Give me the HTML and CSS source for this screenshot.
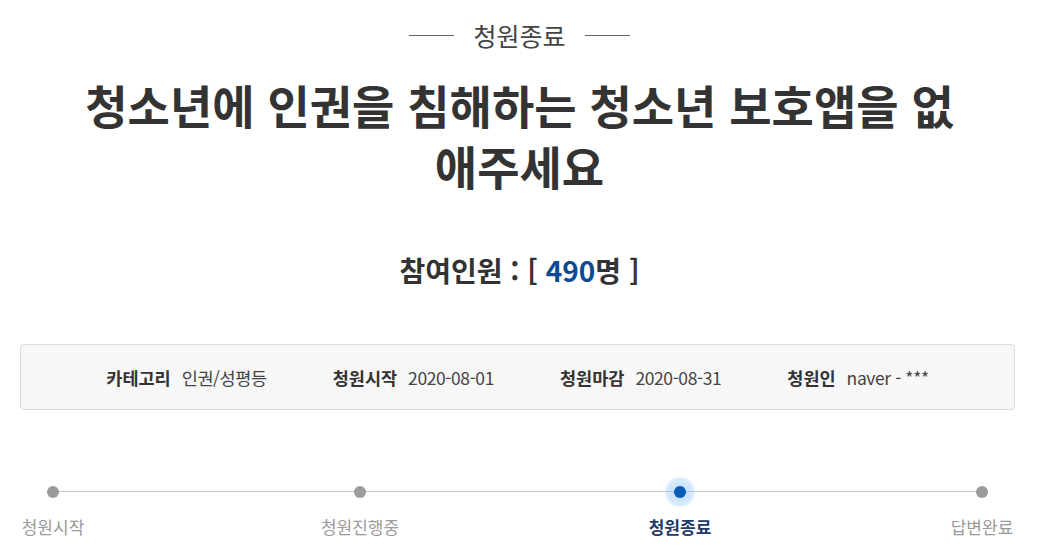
FILE: index.html
```html
<!DOCTYPE html>
<html lang="ko">
<head>
<meta charset="utf-8">
<title>청원종료</title>
<link rel="stylesheet" href="styles.css">
</head>
<body>
<div class="page">
  <div class="status">
    <span class="status-line"></span>
    <span class="status-text">청원종료</span>
    <span class="status-line"></span>
  </div>
  <h1 class="title">청소년에 인권을 침해하는 청소년 보호앱을 없<br>애주세요</h1>
  <p class="count">참여인원 : [ <span class="count-num">490</span>명 ]</p>
  <div class="info">
    <div class="info-item"><span class="info-label">카테고리</span><span class="info-value">인권/성평등</span></div>
    <div class="info-item"><span class="info-label">청원시작</span><span class="info-value">2020-08-01</span></div>
    <div class="info-item"><span class="info-label">청원마감</span><span class="info-value">2020-08-31</span></div>
    <div class="info-item"><span class="info-label">청원인</span><span class="info-value">naver - ***</span></div>
  </div>
  <div class="steps">
    <div class="step step-1"><span class="dot"></span><span class="step-label">청원시작</span></div>
    <div class="step step-2"><span class="dot"></span><span class="step-label">청원진행중</span></div>
    <div class="step step-3 active"><span class="dot"></span><span class="step-label">청원종료</span></div>
    <div class="step step-4"><span class="dot"></span><span class="step-label">답변완료</span></div>
  </div>
</div>
</body>
</html>
```
FILE: styles.css
```css
html, body {
  margin: 0;
  padding: 0;
  background: #fff;
}
body {
  font-family: "Noto Sans CJK KR", "Noto Sans", sans-serif;
  color: #333;
}
.page {
  width: 1039px;
  height: 559px;
  overflow: hidden;
}
.status {
  display: flex;
  justify-content: center;
  align-items: center;
  gap: 19px;
  padding-top: 20px;
  height: 30px;
}
.status-line {
  width: 45px;
  height: 1px;
  background: #666;
}
.status-text {
  font-size: 25px;
  line-height: 30px;
  color: #444;
}
.title {
  margin: 24px 0 0;
  text-align: center;
  font-size: 46px;
  line-height: 61px;
  font-weight: 700;
  color: #333;
}
.count {
  margin: 54px 0 0;
  text-align: center;
  font-size: 28px;
  line-height: 40px;
  font-weight: 700;
  color: #333;
}
.count-num {
  color: #0b4a94;
}
.info {
  margin: 54px 24px 0 20px;
  height: 64px;
  border: 1px solid #ddd;
  border-radius: 4px;
  background: #f7f7f7;
  display: flex;
  justify-content: center;
  align-items: center;
  gap: 66px;
}
.info-item {
  display: flex;
  align-items: baseline;
  gap: 11px;
  font-size: 17.5px;
}
.info-label {
  font-weight: 700;
  color: #333;
}
.info-value {
  color: #444;
  letter-spacing: -0.4px;
}
.steps {
  position: relative;
  display: flex;
  margin-top: 68px;
  padding-left: 3px;
}
.steps::before {
  content: "";
  position: absolute;
  left: 53px;
  width: 929px;
  top: 13px;
  height: 1px;
  background: #c8c8c8;
}
.step {
  position: relative;
  width: 100px;
  display: flex;
  flex-direction: column;
  align-items: center;
}
.step-2 { margin-left: 207px; }
.step-3 { margin-left: 220px; }
.step-4 { margin-left: 202px; }
.dot {
  width: 30px;
  height: 30px;
  margin: -1px 0;
  border-radius: 50%;
  display: flex;
  align-items: center;
  justify-content: center;
}
.dot::after {
  content: "";
  width: 12px;
  height: 12px;
  border-radius: 50%;
  background: #9b9b9b;
}
.active .dot {
  background: radial-gradient(circle, rgba(120,180,245,0.55) 0%, rgba(160,205,250,0.42) 55%, rgba(215,232,252,0.22) 100%);
}
.active .dot::after {
  width: 12px;
  height: 12px;
  background: #0b5cb8;
}
.step-label {
  margin-top: 8px;
  font-size: 17px;
  line-height: 26px;
  color: #9a9a9a;
  white-space: nowrap;
}
.active .step-label {
  font-weight: 700;
  color: #1c3a6a;
}
```
